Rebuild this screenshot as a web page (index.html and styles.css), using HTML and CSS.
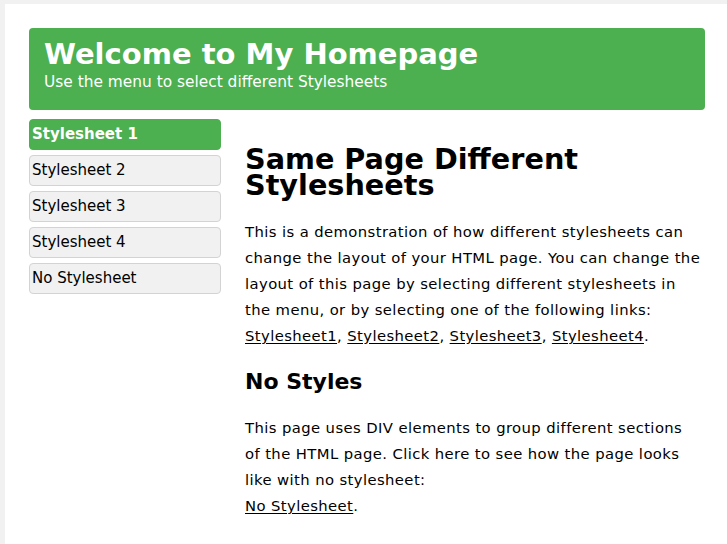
FILE: index.html
```html
<!DOCTYPE html>
<html>
<head>
<meta charset="utf-8">
<title>Same Page Different Stylesheets</title>
<link rel="stylesheet" href="styles.css">
</head>
<body>
<div class="page">
  <div class="header">
    <h1 class="title">Welcome to My Homepage</h1>
    <p class="subtitle">Use the menu to select different Stylesheets</p>
  </div>
  <div class="layout">
    <ul class="menu">
      <li class="menu-item active">Stylesheet 1</li>
      <li class="menu-item">Stylesheet 2</li>
      <li class="menu-item">Stylesheet 3</li>
      <li class="menu-item">Stylesheet 4</li>
      <li class="menu-item">No Stylesheet</li>
    </ul>
    <div class="main">
      <h1 class="main-title">Same Page Different Stylesheets</h1>
      <p class="text">This is a demonstration of how different stylesheets can change the layout of your HTML page. You can change the layout of this page by selecting different stylesheets in the menu, or by selecting one of the following links:<br><a href="#">Stylesheet1</a>, <a href="#">Stylesheet2</a>, <a href="#">Stylesheet3</a>, <a href="#">Stylesheet4</a>.</p>
      <h2 class="section-title">No Styles</h2>
      <p class="text">This page uses DIV elements to group different sections of the HTML page. Click here to see how the page looks like with no stylesheet:<br><a href="#">No Stylesheet</a>.</p>
    </div>
  </div>
</div>
</body>
</html>
```
FILE: styles.css
```css
html, body {
  margin: 0;
  padding: 0;
  background: #f1f1f1;
  overflow: hidden;
  height: 544px;
}
body {
  font-family: "DejaVu Sans", Verdana, sans-serif;
  color: #000;
}
.page {
  background: #fff;
  margin: 4px 0 0 5px;
  padding: 24px 22px 0 24px;
  height: 540px;
  box-sizing: border-box;
}
.header {
  background: #4caf50;
  color: #fff;
  border-radius: 4px;
  padding: 11px 15px 19px 15px;
  margin-bottom: 9px;
}
.title {
  margin: 0;
  font-size: 29px;
  line-height: 30px;
  font-weight: bold;
}
.subtitle {
  margin: 4px 0 0;
  font-size: 15.4px;
  line-height: 18px;
}
.layout {
  display: flex;
}
.menu {
  list-style: none;
  margin: 0;
  padding: 0;
  width: 192px;
  flex: none;
  display: flex;
  flex-direction: column;
  gap: 5px;
}
.menu-item {
  background: #f1f1f1;
  border: 1px solid #d3d3d3;
  border-radius: 4px;
  height: 29px;
  line-height: 29px;
  padding: 0 2px;
  font-size: 15px;
}
.menu-item.active {
  background: #4caf50;
  color: #fff;
  font-weight: bold;
  border-color: #4caf50;
}
.main {
  padding-left: 24px;
  width: 457px;
}
.main-title {
  margin: 27px 0 21px;
  font-size: 28.7px;
  line-height: 26px;
  font-weight: bold;
}
.text {
  margin: 0;
  font-size: 14.8px;
  letter-spacing: 0.4px;
  line-height: 26px;
}
.text a {
  color: #000;
  text-decoration: underline;
  text-underline-offset: 2px;
}
.section-title {
  margin: 20px 0 20px;
  font-size: 22px;
  line-height: 26px;
  font-weight: bold;
}
```
